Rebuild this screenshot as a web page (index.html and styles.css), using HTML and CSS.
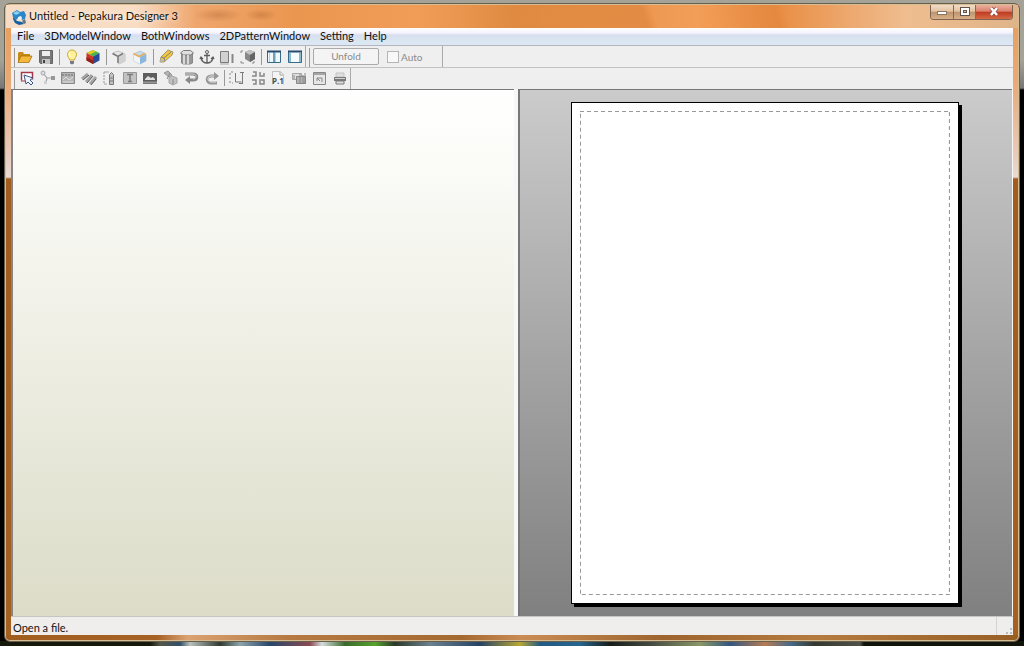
FILE: index.html
```html
<!DOCTYPE html>
<html lang="en">
<head>
    <meta charset="UTF-8">
    <meta name="viewport" content="width=device-width, initial-scale=1.0">
    <title>Untitled - Pepakura Designer 3</title>
    <link rel="stylesheet" href="styles.css">
</head>
<body>
    <div class="window">
        <header class="titlebar">
            <svg class="app-icon" viewBox="0 0 16 16">
                <path d="M1 4l5-3 3 2 4-1 2 4-1 4-3 1-1-3-3 1-2 2-3-3z" fill="#2a86c8"/>
                <path d="M2 8l4 4 5 1 2 2-5 1-4-2-2-4z" fill="#1560a0"/>
                <path d="M2 4l4-2 3 2-4 2z" fill="#8ad0f0"/>
                <path d="M7 8l3-1 1 2-2 2-2-1z" fill="#e9f4fa"/>
                <path d="M11 12l3-2 1 4-2 1z" fill="#5d7386"/>
            </svg>
            <h1 class="title">Untitled - Pepakura Designer 3</h1>
            <div class="caption-buttons">
                <button class="caption minimize" aria-label="Minimize">
                    <svg viewBox="0 0 14 12"><rect x="2.500" y="5.500" width="9" height="3" fill="#fff" stroke="#8a7462"/></svg>
                </button>
                <button class="caption maximize" aria-label="Maximize">
                    <svg viewBox="0 0 14 12"><rect x="2.500" y="1.500" width="9" height="8" fill="#fff" stroke="#655548"/><rect x="5.500" y="4.500" width="3" height="2" fill="#dfc5ad" stroke="#655548"/></svg>
                </button>
                <button class="caption close" aria-label="Close">
                    <svg viewBox="0 0 14 12"><path d="M4 2l6 7M10 2L4 9" stroke="#8d4c42" stroke-width="4"/><path d="M4 2l6 7M10 2L4 9" stroke="#fff" stroke-width="2.500"/></svg>
                </button>
            </div>
        </header>

        <main class="client">
            <nav class="menubar">
                <button>File</button>
                <button>3DModelWindow</button>
                <button>BothWindows</button>
                <button>2DPatternWindow</button>
                <button>Setting</button>
                <button>Help</button>
            </nav>

            <div class="toolbar-row">
                <div class="toolbar main-tools">
                    <div class="group pair">
                        <button aria-label="Open"><svg viewBox="0 0 16 16"><path d="M1 13V4l1-1h4l1 2h6v3" fill="#c98b18"/><path d="M1 13.500L4 7h11l-3 6.500z" fill="#f4b83a" stroke="#9b6810" stroke-width=".7"/></svg></button>
                        <button aria-label="Save"><svg viewBox="0 0 16 16"><path d="M1.500 1.500h13v13h-12l-1-1z" fill="#777" stroke="#666"/><path d="M4 2h8v5H4z" fill="#eee"/><path d="M4 10h8v5H4z" fill="#c5c5c5"/><path d="M5 11h2v3H5z" fill="#444"/></svg></button>
                    </div>
                    <span class="sep"></span>
                    <div class="group pair">
                        <button aria-label="Light"><svg viewBox="0 0 16 16"><path d="M5.500 11c0-2-2-3-2-5.500a4.500 4.500 0 0 1 9 0C12.500 8 10.500 9 10.500 11z" fill="#fff29a" stroke="#c9a531"/><path d="M6 2.500C5 4 5 6 6.500 8" stroke="#fff" fill="none"/><path d="M6 12h4v2.500L8 15.500l-2-1z" fill="#747b86"/></svg></button>
                        <button aria-label="Color"><svg viewBox="0 0 16 16"><path d="M8 1l6.500 3L8 7.500 1.500 4z" fill="#48b849"/><path d="M8 1l3 1.500-6 3L1.500 4z" fill="#e5c926"/><path d="M1.500 4L8 7.500V15l-6.500-3.500z" fill="#ce3524"/><path d="M14.500 4L8 7.500V15l6.500-3.500z" fill="#264b98"/><path d="M1.500 8L8 11.500V15l-6.500-3.500z" fill="#8e2119"/></svg></button>
                    </div>
                    <span class="sep"></span>
                    <div class="group pair">
                        <button aria-label="Edges" disabled><svg viewBox="0 0 16 16"><path d="M2 4l5-2 7 3v7l-6 3-1-1V8z" fill="#e6e6e6" stroke="#bbb"/><path d="M8 8l6-3v7l-6 3z" fill="#ccc"/><path d="M1.500 4.500L7 7.500 12 4.500M7 7.500V14" fill="none" stroke="#666" stroke-width="1.500"/></svg></button>
                        <button aria-label="Texture"><svg viewBox="0 0 16 16"><path d="M2 5l6-3 6 3v7l-6 3-6-3z" fill="#c5dced" stroke="#b8c8d6"/><path d="M2 5l6 3v7l-6-3z" fill="#f1f5f8"/><path d="M8 8l6-3v7l-6 3z" fill="#8ab7de"/><path d="M1.500 4.500L7 7.500l6-3" fill="none" stroke="#e5ad62" stroke-width="1.700"/></svg></button>
                    </div>
                    <span class="sep"></span>
                    <div class="group edit">
                        <button aria-label="Mark edges"><svg viewBox="0 0 16 16"><path d="M2 13l1-5 7-7 5 2-1 3-8 7z" fill="#f4c63a" stroke="#a1966f"/><path d="M3 8l3 1 1 3M6 9l7-6" stroke="#7e857e" fill="none"/><path d="M2 13l1-4 3 3z" fill="#b7b7b7"/></svg></button>
                        <button aria-label="Cylinder" disabled><svg viewBox="0 0 16 16"><path d="M2.500 4h11v10l-2 1h-7l-2-1z" fill="#888" stroke="#777"/><path d="M1.500 4l3-2.500h7l3 2.500-3 2h-7z" fill="#ddd" stroke="#666"/><path d="M5 6v9M9 6v9" stroke="#eee" stroke-width="1.500"/></svg></button>
                        <button aria-label="Anchor" disabled><svg viewBox="0 0 16 16"><circle cx="8" cy="3" r="1.500" fill="none" stroke="#444"/><path d="M8 5v9M5 6.500h6M2 9c1 4 3 5 6 5s5-1 6-5M1 10l1-2 2 2M12 10l2-2 1 2" fill="none" stroke="#444" stroke-width="1.300"/></svg></button>
                        <button aria-label="Size" disabled><svg viewBox="0 0 16 16"><path d="M1.500 2.500h8v11h-8z" fill="#ccc" stroke="#666"/><path d="M13.500 5v9" stroke="#777" stroke-width="2"/><path d="M1 15h9" stroke="#999"/></svg></button>
                        <button aria-label="Fit view" disabled><svg viewBox="0 0 16 16"><path d="M1 4V2h2M1 12v2h3M12 14h2v-2" fill="none" stroke="#777"/><path d="M5 3l5-2 5 2v7l-5 3-5-3z" fill="#777"/><path d="M5 3l5-2 5 2-5 3z" fill="#bbb"/><path d="M10 6v7l5-3V3z" fill="#4c4c4c"/></svg></button>
                    </div>
                    <span class="sep"></span>
                    <div class="group pair">
                        <button aria-label="Show both windows"><svg viewBox="0 0 16 16"><path d="M1.500 2.500h13v11h-13z" fill="#eef9ff" stroke="#356c8a"/><path d="M1 2.500h14" stroke="#244b70" stroke-width="2"/><path d="M8 3v10" stroke="#356c8a" stroke-width="1.300"/><path d="M3.500 4v9M9.500 4v9" stroke="#a5d0e3"/></svg></button>
                        <button aria-label="Show one window"><svg viewBox="0 0 16 16"><path d="M1.500 2.500h13v11h-13z" fill="#f5fbff" stroke="#356c8a"/><path d="M1 2.500h14" stroke="#244b70" stroke-width="2"/><path d="M3 4v9M13 4v9" stroke="#8db8d2" stroke-width="2"/></svg></button>
                    </div>
                </div>
                <div class="toolbar unfold-tools">
                    <button class="unfold" disabled>Unfold</button>
                    <label class="auto"><input type="checkbox" disabled>Auto</label>
                </div>
            </div>

            <div class="toolbar-row">
                <div class="toolbar pattern-tools">
                    <div class="group shapes">
                        <button aria-label="Select"><svg viewBox="0 0 16 16"><path d="M2.500 10.500v-8h11v7" fill="#fff" stroke="#a53848" stroke-width="1.500"/><path d="M2 11h4" stroke="#a53848"/><path d="M5 5l2 9 2-2 3 3 2-2-3-3 3-2z" fill="#eef5ff" stroke="#3d557e"/></svg></button>
                        <button aria-label="Join faces" disabled><svg viewBox="0 0 16 16"><path d="M3 3l4 5 6 0M7 8l-1 4" stroke="#999" stroke-width="1.200" fill="none"/><circle cx="3" cy="3" r="2" fill="#ddd" stroke="#999"/><path d="M11 6h4v4h-4z" fill="#888"/><path d="M4 11h3v3H4z" fill="#ccc"/></svg></button>
                        <button aria-label="Edit flaps" disabled><svg viewBox="0 0 16 16"><path d="M1.500 2.500h13v11h-13z" fill="#aaa" stroke="#777"/><path d="M2 5h12" stroke="#555" stroke-dasharray="2 1"/><path d="M3 10l3-3 3 3 4-3M3 12h10" stroke="#ddd" fill="none"/></svg></button>
                        <button aria-label="Edge color" disabled><svg viewBox="0 0 16 16"><path d="M1 9l6-5M5 12l6-7M9 14l6-7" stroke="#999" stroke-width="3"/><path d="M2 10l6-5M6 13l6-7M10 15l5-6" stroke="#444"/></svg></button>
                        <button aria-label="Divide" disabled><svg viewBox="0 0 16 16"><path d="M3 2v12" stroke="#888" stroke-dasharray="2 1"/><path d="M3 2h5M3 14h3" stroke="#999"/><path d="M8.500 4.500l2-2 2 2v10h-4z" fill="#bbb" stroke="#666"/><path d="M9 8h3M9 11h3" stroke="#666"/></svg></button>
                        <button aria-label="Add text" disabled><svg viewBox="0 0 16 16"><path d="M1.500 2.500h13v11h-13z" fill="#bcbcbc" stroke="#888"/><path d="M5 4.500h6M8 4v8M6 11.500h4" stroke="#666" stroke-width="1.500"/></svg></button>
                        <button aria-label="Add picture" disabled><svg viewBox="0 0 16 16"><path d="M1 3h14v11H1z" fill="#444"/><path d="M3 9l3-3 3 2 2-1 2 2v1H3z" fill="#ddd"/><path d="M1 12.500h14" stroke="#888" stroke-width="2"/></svg></button>
                        <button aria-label="Show 3D part" disabled><svg viewBox="0 0 16 16"><path d="M1 3l4-2 4 4-3 2z" fill="#aaa" stroke="#888"/><path d="M6 8l3-2 5 2v5l-4 2-4-2z" fill="#bbb" stroke="#999"/><path d="M7 3l-3 6M10 9v5" stroke="#777"/></svg></button>
                        <button aria-label="Undo" disabled><svg viewBox="0 0 16 16"><path d="M2 4h8c5 0 5 6 0 6H5" fill="none" stroke="#777" stroke-width="3"/><path d="M7 6v8l-5-4z" fill="#777"/><path d="M2 4h8c4 0 4 5 0 5" fill="none" stroke="#ccc"/></svg></button>
                        <button aria-label="Redo" disabled><svg viewBox="0 0 16 16"><path d="M11 6H7C2 6 2 13 7 13h6" fill="none" stroke="#888" stroke-width="3"/><path d="M10 2v8l5-4z" fill="#888"/><path d="M10 6H7c-4 0-4 6 0 6h5" fill="none" stroke="#ddd"/></svg></button>
                    </div>
                    <span class="sep"></span>
                    <div class="group layout">
                        <button aria-label="Arrange parts" disabled><svg viewBox="0 0 16 16"><path d="M4 2H1v11h3" fill="none" stroke="#777" stroke-dasharray="2 2"/><path d="M6.500 3v9h6M13.500 2v12M10 13.500h4M11 2.500h4" fill="none" stroke="#666"/></svg></button>
                        <button aria-label="Distribute" disabled><svg viewBox="0 0 16 16"><path d="M3 2h3v4H2M10 2v4h4V3M2 10h4v4H3M10 9v5h4v-4h-3" fill="none" stroke="#777" stroke-width="1.500"/></svg></button>
                        <button aria-label="Page numbers" disabled><svg viewBox="0 0 16 16"><path d="M2.500 14.500v-13h8l3 3v10" fill="#f5f5f5" stroke="#bbb"/><path d="M10 2v3h3" fill="none" stroke="#999"/><text x="2" y="14" class="page-label">P.1</text></svg></button>
                        <button aria-label="Page layout" disabled><svg viewBox="0 0 16 16"><path d="M1.500 3.500h9v6h-9z" fill="#ddd" stroke="#999"/><path d="M5.500 6.500h9v7h-9z" fill="#aaa" stroke="#777"/><path d="M3 5v4M9 4v9M12 5v9M14 3v11" stroke="#777"/></svg></button>
                        <button aria-label="Rotate page" disabled><svg viewBox="0 0 16 16"><path d="M2.500 2.500h12v12h-12z" fill="#e5e5e5" stroke="#777"/><path d="M3 4h11" stroke="#999" stroke-width="2"/><path d="M6 11V8h5v4M6 8l3 3" fill="none" stroke="#777"/></svg></button>
                        <button aria-label="Print" disabled><svg viewBox="0 0 16 16"><path d="M4 3h8v4H4z" fill="#ddd" stroke="#bbb"/><path d="M2 7h12v4H2z" fill="#666"/><path d="M3 8.500h10" stroke="#ccc"/><path d="M4 11h8v3H4z" fill="#ddd" stroke="#666"/></svg></button>
                    </div>
                </div>
            </div>

            <div class="views">
                <section class="model-view" aria-label="3D model"></section>
                <section class="pattern-view" aria-label="2D pattern">
                    <div class="paper">
                        <svg class="margins"><rect x="0" y="0" width="100%" height="100%"/></svg>
                    </div>
                </section>
            </div>

            <footer class="statusbar">
                <span class="status-text">Open a file.</span>
                <span class="grip"></span>
            </footer>
        </main>
    </div>
</body>
</html>
```

FILE: styles.css
```css
* {
    margin: 0;
    padding: 0;
    box-sizing: border-box;
}

body {
    display: flex;
    height: 100vh;
    padding: 3px 4px 4px;
    overflow: hidden;
    font-family: Lato, "Open Sans", sans-serif;
    font-size: 11px;
    line-height: 16px;
    color: #111;
    /* taskbar thumbnails at the bottom, another window behind the top */
    background:
        linear-gradient(90deg, #15180a 0 150px, #54564a 160px, #334f68 180px, #bac1bd 190px, #303a30 220px, #8da3ab 240px, #28466c 270px, #8b4a52 310px, #d5ddde 322px, #396b2c 345px, #57a32d 375px, #2b3829 395px, #6c8190 430px, #264365 480px, #b8a832 520px, #235b84 540px, #27658f 580px, #171d19 610px, #444940 650px, #8a9867 700px, #345680 730px, #b57b52 765px, #496a87 790px, #34382f 815px, #50524a 860px, #10140a 864px) 0 100% / 100% 5px no-repeat,
        linear-gradient(#a5a297 0 60px, #777 88px, #000 90px) #000;
}

button {
    font: inherit;
    color: inherit;
    border: 0;
    background: none;
}

.window {
    display: flex;
    flex: 1;
    flex-direction: column;
    padding: 0 6px 6px;
    border: 1px solid #68604f;
    border-radius: 6px;
    background:
        linear-gradient(90deg, #a15d20, #a66124 15%, #dba272 18%, #b57941 28%, #a46831 45%, #ca8c53 51%, #9d642f 65%, #b57a3e 80%, #965e25) 0 100% / 100% 6px no-repeat,
        linear-gradient(#e89b57, #e9aa77 80px, #e9cabc 150px, #eadad4 173px, #a15c1e 175px, #a56120);
    box-shadow: inset 0 0 0 1px #d7bd94;
}

.titlebar {
    display: flex;
    align-items: center;
    height: 23px;
    margin: 1px -5px 0;
    padding: 0 5px;
    background:
        radial-gradient(ellipse 24px 7px at 212px 10px, rgba(155, 82, 32, .3), transparent),
        radial-gradient(ellipse 16px 6px at 255px 10px, rgba(155, 82, 32, .3), transparent),
        linear-gradient(70deg, transparent 45%, rgba(210, 120, 48, .4) 63%, transparent 64%, transparent 70%, rgba(220, 130, 55, .4) 76%, transparent 77%),
        linear-gradient(90deg, #f6dcc5, #f8ddc4 130px, #efa66d 190px, #ea964f 290px, #f19d58 410px, #e18c43 510px, #f29d58 690px, #e98d43 770px, #efbd8f 900px, #dfb489);
}

.app-icon {
    width: 16px;
    height: 16px;
    margin-right: 2px;
}

.title {
    padding-bottom: 2px;
    font-size: 11px;
    font-weight: normal;
    text-shadow: 0 0 5px #fff;
}

.caption-buttons {
    display: flex;
    align-self: flex-start;
    height: 15px;
    margin-left: auto;
    border: 1px solid #7e6450;
    border-top: 0;
    border-radius: 0 0 4px 4px;
    overflow: hidden;
}

.caption {
    display: flex;
    justify-content: center;
    align-items: center;
    width: 22px;
    background: linear-gradient(#f2dcc6, #e3c2a1 45%, #bb9370 50%, #d9b087);
}

.caption + .caption {
    border-left: 1px solid #846a54;
}

.caption svg {
    width: 14px;
    height: 12px;
}

.caption.close {
    width: 37px;
    background: linear-gradient(#eab09d, #db806c 45%, #bd3a21 50%, #d66b45);
}

.client {
    display: flex;
    flex: 1;
    flex-direction: column;
    min-height: 0;
    background: #efefef;
}

.menubar {
    display: flex;
    height: 18px;
    padding-left: 1px;
    background: linear-gradient(#fff, #f3f2fc 5px, #d6dfef 7px, #dbe8f3 15px);
    border-bottom: 1px solid #b5b4c3;
}

.menubar button {
    padding: 0 5px 1px;
}

.toolbar-row {
    display: flex;
    height: 22px;
    border-bottom: 1px solid #c2c2c2;
}

.toolbar-row + .toolbar-row {
    height: 21px;
    border-bottom: 0;
}

.toolbar {
    display: flex;
    align-items: center;
    border-right: 1px solid #aaa;
    background: linear-gradient(#999, #999) 3px 2px / 1px 100% no-repeat;
}

.main-tools {
    padding-left: 4px;
}

.pattern-tools {
    padding: 0 0 2px 6px;
}

.group {
    display: flex;
}

.group button {
    display: flex;
    flex: 1;
    justify-content: center;
    align-items: center;
    height: 20px;
}

.group svg {
    width: 16px;
    height: 16px;
}

.group button:disabled svg {
    opacity: .85;
}

.pair {
    width: 41px;
}

.edit {
    width: 102px;
}

.shapes {
    width: 205px;
}

.layout {
    width: 123px;
}

.sep {
    width: 1px;
    height: 16px;
    margin: 0 2px 0 3px;
    background: #999;
}

.pattern-tools .sep {
    margin: 0 2px;
}

.page-label {
    font: bold 8px "Open Sans", sans-serif;
    fill: #333;
}

.unfold-tools {
    padding: 0 20px 0 7px;
    color: #8b8b8b;
    font-size: 10px;
}

.unfold {
    width: 66px;
    height: 17px;
    border: 1px solid #aaa;
    border-radius: 2px;
    background: #f4f4f4;
    line-height: 15px;
}

.auto {
    display: flex;
    align-items: center;
    gap: 2px;
    margin-left: 8px;
}

.auto input {
    appearance: none;
    width: 12px;
    height: 12px;
    border: 1px solid #b5b5b5;
    background: #f8f8f8;
}

.views {
    display: grid;
    flex: 1;
    grid-template-columns: 50.2% 1fr;
    gap: 4px;
    min-height: 0;
    padding-right: 1px;
    background: #f7f7f7;
}

.model-view {
    border-top: 1px solid #777;
    border-left: 2px solid #858585;
    background: linear-gradient(#fff, #fdfdfb 8%, #dcdcc8);
}

.pattern-view {
    display: flex;
    justify-content: center;
    min-height: 0;
    padding: 12px 2px 12px 0;
    border-top: 1px solid #777;
    border-left: 2px solid #777;
    background: linear-gradient(#cbcbcb, #808080);
}

.paper {
    height: 100%;
    aspect-ratio: 17 / 22;
    padding: 8px;
    border: 1px solid #000;
    background: #fff;
    box-shadow: 3px 3px 0 #000;
}

.margins {
    display: block;
    width: 100%;
    height: 100%;
}

.margins rect {
    fill: none;
    stroke: #999;
    stroke-width: 2px;
    stroke-dasharray: 4 3;
}

.statusbar {
    display: flex;
    justify-content: space-between;
    height: 19px;
    padding-left: 2px;
    border-top: 1px solid #c5c5c5;
    background: #f0eded;
    line-height: 22px;
}

.grip {
    width: 17px;
    border-left: 1px solid #d5d2d2;
    background:
        radial-gradient(circle, #bbb 1px, transparent 1px) 100% 100% / 4px 4px no-repeat,
        radial-gradient(circle, #bbb 1px, transparent 1px) 8px 100% / 4px 4px no-repeat,
        radial-gradient(circle, #bbb 1px, transparent 1px) 100% 10px / 4px 4px no-repeat;
}
```
